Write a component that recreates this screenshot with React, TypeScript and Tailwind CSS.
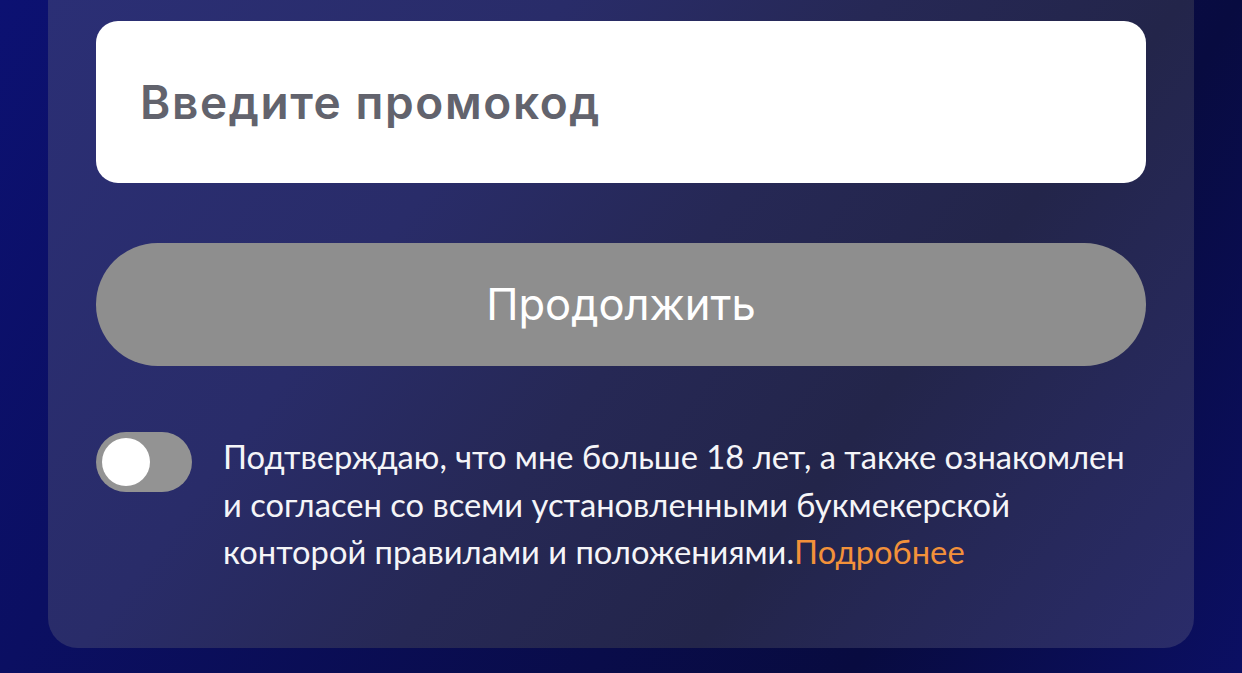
import React from "react";

export default function App() {
  return (
    <div className="w-[1242px] h-[673px] overflow-hidden bg-[linear-gradient(120deg,#0c1172_0%,#0b0f62_24%,#090c4a_60%,#080b40_76%,#0b0f63_100%)]">
      <div className="mx-[48px] -mt-[40px] h-[688px] rounded-[30px] bg-[linear-gradient(127deg,#2b2f76_0%,#292c69_33%,#262855_52%,#23254a_70%,#2a2c6a_100%)] px-[48px] pt-[61px]">
        <div className="h-[162px] rounded-[22px] bg-white flex items-center pl-[44px]">
          <span className="text-[46px] font-semibold text-[#62636d] tracking-[0.035em] font-['Inter',sans-serif]">
            Введите промокод
          </span>
        </div>
        <button className="mt-[60px] w-full h-[123px] rounded-full bg-[#8e8e8e] flex items-center justify-center">
          <span className="text-[43.5px] text-white font-['Inter',sans-serif]">Продолжить</span>
        </button>
        <div className="mt-[66px] flex items-start gap-[31px]">
          <div className="w-[96px] h-[60px] shrink-0 rounded-full bg-[#939393] p-[6px]">
            <div className="w-[48px] h-[48px] rounded-full bg-white" />
          </div>
          <p className="text-[32.7px] leading-[47.5px] text-[#f5f5f8] font-['Lato',sans-serif] mt-[1px]">
            Подтверждаю, что мне больше 18 лет, а также ознакомлен
            <br />
            и согласен со всеми установленными букмекерской
            <br />
            конторой правилами и положениями.
            <span className="text-[#f3913a]">Подробнее</span>
          </p>
        </div>
      </div>
    </div>
  );
}
